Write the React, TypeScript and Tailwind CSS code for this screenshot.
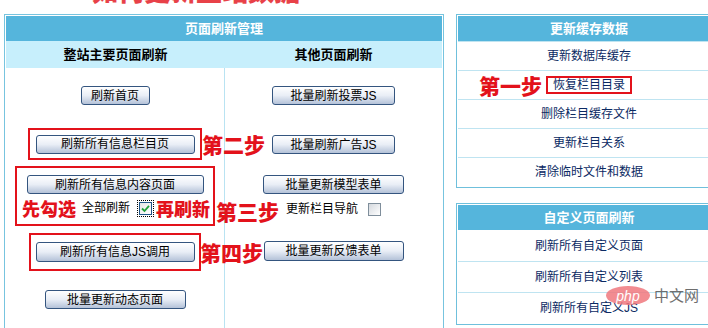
import type { ReactNode } from 'react';

const cjk = "font-['Liberation_Sans','Noto_Sans_CJK_SC',sans-serif]";
const step = "font-['Noto_Sans_CJK_SC',sans-serif] font-black text-[#e3121b] whitespace-nowrap leading-none";

const Btn = ({ className, children }: { className: string; children: ReactNode }) => (
  <button
    type="button"
    className={`${className} shrink-0 flex items-center justify-center rounded-[3px] border border-[#34557f] bg-linear-to-b from-white via-[#e9eef6] to-[#b4c2d8] text-[12px] leading-none text-black`}
  >
    {children}
  </button>
);

const Check = ({ checked }: { checked?: boolean }) =>
  checked ? (
    <span className="flex h-[17px] w-[17px] items-center justify-center outline-1 outline-dotted outline-black -outline-offset-1">
      <span className="flex h-[13px] w-[13px] items-center justify-center border border-[#1d5587] bg-linear-to-br from-[#e6e6e6] to-white">
        <svg width="9" height="9" viewBox="0 0 9 9">
          <path d="M1 4.5 L3.5 7 L8 1.8" fill="none" stroke="#21a33a" strokeWidth="1.8" />
        </svg>
      </span>
    </span>
  ) : (
    <span className="block h-[13px] w-[13px] border border-[#7f8e9b] bg-linear-to-br from-[#d5d9de] to-white" />
  );

const SideRow = ({ children }: { children: ReactNode }) => (
  <div className="flex h-[29px] items-center justify-center border-t border-[#bfe4f1] text-[12px] text-[#0b2a63]">
    {children}
  </div>
);

export default function App() {
  return (
    <div className={`${cjk} relative h-[328px] w-[708px] overflow-hidden bg-white`}>
      {/* title cut off at the top */}
      <div className="h-[14px] overflow-hidden pl-[92px]">
        <div className={`${step} -mt-[23px] text-[26px] opacity-80`}>如何更新整站数据</div>
      </div>

      <div className="flex items-start pl-[4px]">
        {/* left panel */}
        <div className="w-[440px] shrink-0 border border-[#77c4df] p-px">
          <div className="flex h-[25px] items-center justify-center bg-[#55b5dc] text-[13px] font-bold text-white">
            页面刷新管理
          </div>
          <div className="grid h-[27px] grid-cols-[219px_1fr] items-center bg-[#c7effc] text-[13px] font-bold text-black">
            <div className="text-center">整站主要页面刷新</div>
            <div className="text-center">其他页面刷新</div>
          </div>
          <div className="grid h-[270px] grid-cols-[219px_1fr]">
            <div className="flex flex-col items-center border-r border-[#b9e3f2] pt-[18px]">
              <Btn className="h-[19px] w-[69px]">刷新首页</Btn>

              <div className="relative mt-[23px] flex h-[32px] w-[174px] items-center justify-center border-2 border-[#e3121b]">
                <Btn className="h-[19px] w-[159px]">刷新所有信息栏目页</Btn>
                <span className={`${step} absolute left-full top-1/2 ml-[2px] -translate-y-1/2 text-[21px]`}>第二步</span>
              </div>

              <div className="relative mt-[6px] flex h-[60px] w-[200px] flex-col items-center border-2 border-[#e3121b] pt-[7px]">
                <Btn className="h-[19px] w-[177px]">刷新所有信息内容页面</Btn>
                <div className="mt-[4px] flex h-[20px] w-full items-center pl-[5px]">
                  <span className={`${step} text-[18px]`}>先勾选</span>
                  <span className="ml-[6px] text-[12px] text-black">全部刷新</span>
                  <span className="ml-[7px]">
                    <Check checked />
                  </span>
                  <span className={`${step} ml-[2px] text-[18px]`}>再刷新</span>
                </div>
                <span className={`${step} absolute bottom-[2px] left-full ml-[3px] text-[21px]`}>第三步</span>
              </div>

              <div className="relative mt-[7px] flex h-[38px] w-[172px] items-center justify-center border-2 border-[#e3121b]">
                <Btn className="h-[20px] w-[159px]">刷新所有信息JS调用</Btn>
                <span className={`${step} absolute left-full top-1/2 ml-[1px] -translate-y-1/2 text-[21px]`}>第四步</span>
              </div>

              <Btn className="mt-[19px] h-[19px] w-[141px]">批量更新动态页面</Btn>
            </div>

            <div className="flex flex-col items-center pt-[18px]">
              <Btn className="h-[19px] w-[123px]">批量刷新投票JS</Btn>
              <Btn className="mt-[30px] h-[19px] w-[123px]">批量刷新广告JS</Btn>
              <Btn className="mt-[21px] h-[19px] w-[141px]">批量更新模型表单</Btn>
              <div className="mt-[5px] flex h-[20px] items-center text-[12px] text-black">
                <span>更新栏目导航</span>
                <span className="ml-[10px]">
                  <Check />
                </span>
              </div>
              <Btn className="mt-[22px] h-[20px] w-[140px]">批量更新反馈表单</Btn>
            </div>
          </div>
        </div>

        {/* right panels */}
        <div className="ml-[12px] flex w-[266px] shrink-0 flex-col">
          <div className="border border-[#6fc0dc] p-px">
            <div className="flex h-[25px] items-center justify-center bg-[#55b5dc] text-[13px] font-bold text-white">
              更新缓存数据
            </div>
            <SideRow>更新数据库缓存</SideRow>
            <SideRow>
              <span className="relative flex h-[18px] items-center border-2 border-[#e3121b] px-[5px]">
                恢复栏目目录
                <span className={`${step} absolute right-full top-1/2 mr-[6px] -translate-y-1/2 text-[21px]`}>第一步</span>
              </span>
            </SideRow>
            <SideRow>删除栏目缓存文件</SideRow>
            <SideRow>更新栏目关系</SideRow>
            <SideRow>清除临时文件和数据</SideRow>
          </div>

          <div className="mt-[15px] border border-[#6fc0dc] p-px">
            <div className="flex h-[25px] items-center justify-center bg-[#55b5dc] text-[13px] font-bold text-white">
              自定义页面刷新
            </div>
            <div className="flex h-[31px] items-center justify-center text-[12px] text-[#0b2a63]">刷新所有自定义页面</div>
            <div className="flex h-[31px] items-center justify-center border-t border-[#bfe4f1] text-[12px] text-[#0b2a63]">刷新所有自定义列表</div>
            <div className="flex h-[31px] items-center justify-center border-t border-[#bfe4f1] text-[12px] text-[#0b2a63]">刷新所有自定义JS</div>
          </div>
        </div>
      </div>

      {/* watermark */}
      <div className="pointer-events-none absolute left-[606px] top-[286px] flex items-center opacity-85">
        <span className="flex h-[19px] w-[44px] items-center justify-center rounded-[50%] bg-[#f0787e] text-[14px] italic leading-none text-white">
          php
        </span>
        <span className="ml-[4px] text-[15px] leading-none text-[#555]">中文网</span>
      </div>
    </div>
  );
}
